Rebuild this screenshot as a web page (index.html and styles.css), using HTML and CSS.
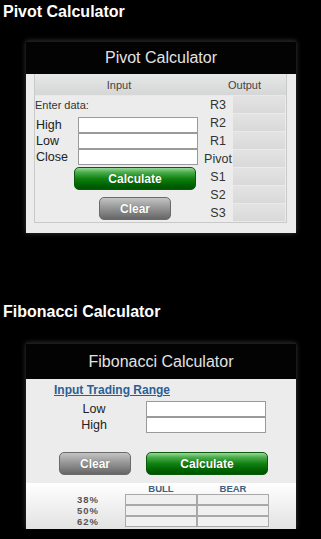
FILE: index.html
```html
<!DOCTYPE html>
<html>
<head>
<meta charset="utf-8">
<link rel="stylesheet" href="styles.css">
</head>
<body>
<h2 class="page-title">Pivot Calculator</h2>
<div class="panel">
  <div class="panel-head pivot-head">Pivot Calculator</div>
  <div class="pivot-body">
    <div class="pv-table">
      <div class="pv-th">Input</div>
      <div class="pv-th">Output</div>
      <div class="pv-input">
        <div class="enter">Enter data:</div>
        <div class="fields">
          <span class="flabel">High</span><input class="field" type="text">
          <span class="flabel">Low</span><input class="field" type="text">
          <span class="flabel">Close</span><input class="field" type="text">
        </div>
        <button class="btn btn-green pv-calc">Calculate</button>
        <button class="btn btn-gray pv-clear">Clear</button>
      </div>
      <div class="pv-output">
        <div class="olabel">R3</div><div class="ocell"></div>
        <div class="olabel">R2</div><div class="ocell"></div>
        <div class="olabel">R1</div><div class="ocell"></div>
        <div class="olabel">Pivot</div><div class="ocell"></div>
        <div class="olabel">S1</div><div class="ocell"></div>
        <div class="olabel">S2</div><div class="ocell"></div>
        <div class="olabel">S3</div><div class="ocell"></div>
      </div>
    </div>
  </div>
</div>

<h2 class="page-title fib-title">Fibonacci Calculator</h2>
<div class="panel">
  <div class="panel-head fib-head">Fibonacci Calculator</div>
  <div class="fib-body">
    <a class="range-link" href="#">Input Trading Range</a>
    <div class="fib-fields">
      <span class="fib-label">Low</span><input class="field" type="text">
      <span class="fib-label">High</span><input class="field" type="text">
    </div>
    <div class="fib-buttons">
      <button class="btn btn-gray fib-clear">Clear</button>
      <button class="btn btn-green fib-calc">Calculate</button>
    </div>
  </div>
  <div class="fib-results">
    <span></span><span class="rhead">BULL</span><span class="rhead">BEAR</span>
    <span class="rlabel">38%</span><span class="rcell"></span><span class="rcell"></span>
    <span class="rlabel">50%</span><span class="rcell"></span><span class="rcell"></span>
    <span class="rlabel">62%</span><span class="rcell"></span><span class="rcell"></span>
  </div>
</div>
</body>
</html>
```

FILE: styles.css
```css
* { box-sizing: border-box; }

body {
  margin: 0;
  padding: 2px 0 0 0;
  background: #000;
  font-family: "Liberation Sans", Arial, sans-serif;
  color: #333;
}

.page-title {
  margin: 0 0 19px 0;
  padding-left: 3px;
  font-size: 16px;
  line-height: 20px;
  font-weight: bold;
  color: #fff;
}

.fib-title {
  margin-top: 69px;
  margin-bottom: 21px;
}

.panel {
  margin-left: 26px;
  width: 270px;
  background: #ececec;
  box-shadow: 0 0 5px rgba(110, 110, 110, 0.55);
}

.panel-head {
  background: #030303;
  color: #e2e2e2;
  font-size: 16px;
  text-align: center;
  border-top: 1px solid #1c1c1c;
}

.pivot-head {
  height: 33px;
  line-height: 32px;
}

.fib-head {
  height: 36px;
  line-height: 35px;
}

/* ---------- Pivot ---------- */
.pivot-body {
  padding: 0 9px 10px 8px;
}

.pv-table {
  display: grid;
  grid-template-columns: 168px 1fr;
  border: 1px solid #c9c9c9;
  border-top: none;
}

.pv-th {
  height: 22px;
  line-height: 22px;
  font-size: 11px;
  color: #444;
  text-align: center;
  background: linear-gradient(#e6e8e8, #d5d7d7);
  border-bottom: 1px solid #e8e8e8;
}

.pv-input {
  display: flex;
  flex-direction: column;
  align-items: flex-start;
}

.enter {
  height: 21px;
  line-height: 19px;
  font-size: 11px;
  color: #333;
  padding-left: 0;
}

.fields {
  display: grid;
  grid-template-columns: 42px 120px;
  grid-auto-rows: 16px;
  padding-left: 1px;
}

.flabel {
  font-size: 12.5px;
  line-height: 16px;
  color: #222;
}

.field {
  width: 120px;
  height: 16px;
  margin: 0;
  padding: 0;
  border: 1px solid #9a9a9a;
  background: #fff;
}

.btn {
  display: block;
  height: 23px;
  margin: 0;
  padding: 0;
  border-radius: 5px;
  font-family: "Liberation Sans", Arial, sans-serif;
  font-size: 12px;
  font-weight: bold;
  color: #fff;
  text-shadow: 0 0 1px rgba(0, 0, 0, 0.4);
}

.btn-green {
  width: 122px;
  border: 1px solid #0b5a0b;
  background: linear-gradient(#9ad89a 0%, #4cae4c 20%, #128212 50%, #006400 80%, #005200 100%);
}

.btn-gray {
  width: 72px;
  border: 1px solid #6a6a6a;
  background: linear-gradient(#c4c4c4 0%, #a6a6a6 30%, #8a8a8a 60%, #666 100%);
}

.pv-calc {
  margin: 2px 0 0 39px;
}

.pv-clear {
  margin: 7px 0 0 64px;
}

.pv-output {
  display: grid;
  grid-template-columns: 30px 52px;
  grid-auto-rows: 18px;
}

.olabel {
  font-size: 12.5px;
  line-height: 18px;
  text-align: center;
  color: #333;
}

.ocell {
  background: linear-gradient(#e3e3e3, #d9d9d9);
  border-bottom: 1px solid #eaeaea;
}

/* ---------- Fibonacci ---------- */
.fib-body {
  padding: 4px 0 8px 0;
}

.range-link {
  display: block;
  margin-left: 28px;
  font-size: 12px;
  line-height: 14px;
  font-weight: bold;
  color: #2a5f95;
  text-decoration: underline;
}

.fib-fields {
  display: grid;
  grid-template-columns: 48px 120px;
  grid-auto-rows: 16px;
  column-gap: 28px;
  margin: 4px 0 0 44px;
}

.fib-label {
  font-size: 12.5px;
  line-height: 16px;
  text-align: center;
  color: #222;
}

.fib-buttons {
  display: flex;
  gap: 15px;
  margin: 19px 0 0 33px;
}

.fib-results {
  display: grid;
  grid-template-columns: 99px 72px 72px;
  grid-template-rows: 11px 11px 11px 11px;
  padding-bottom: 2px;
  background: linear-gradient(#ffffff, #e2e2e2);
}

.rhead {
  font-size: 9.5px;
  line-height: 11px;
  font-weight: bold;
  text-align: center;
  color: #3d5f80;
}

.rlabel {
  font-size: 9.5px;
  line-height: 11px;
  font-weight: bold;
  letter-spacing: 1px;
  color: #555;
  text-align: right;
  padding-right: 26px;
}

.rcell {
  border: 1px solid #a9a9a9;
  background: #f0f0f0;
}
```
